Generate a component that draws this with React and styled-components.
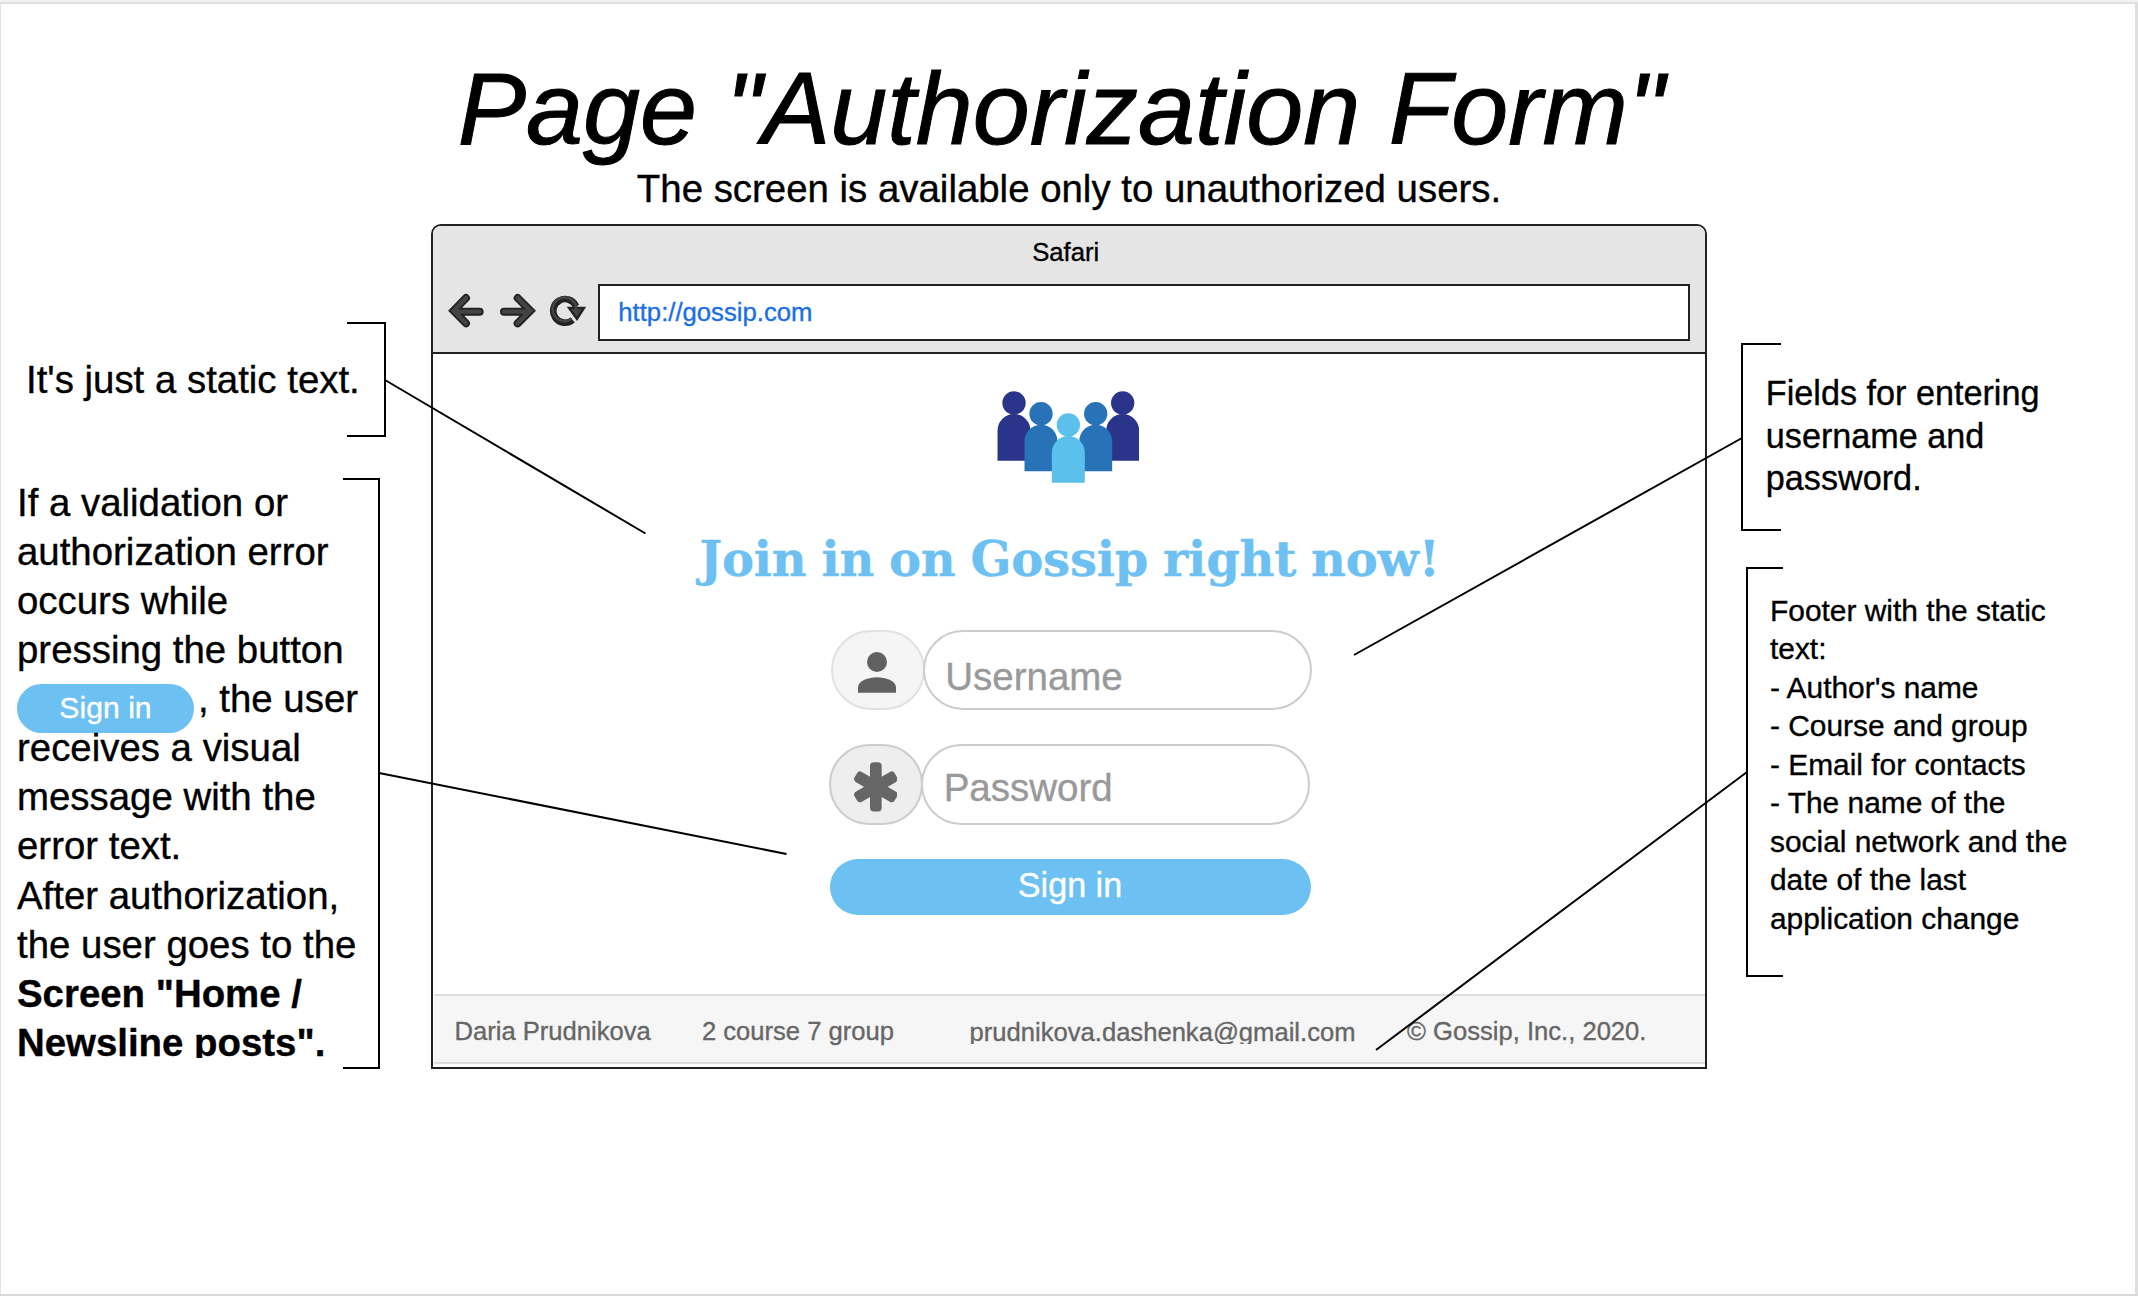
import React from 'react';
import styled, { createGlobalStyle } from 'styled-components';

const sans = '"Liberation Sans", Arial, sans-serif';
const ink = '#222222';
const blue = '#6cc1f2';

const GlobalStyle = createGlobalStyle`
  * { box-sizing: border-box; }
  body { margin: 0; background: #ffffff; font-family: ${sans}; }
`;

const Board = styled.main`
  position: relative;
  width: 2138px;
  height: 1296px;
  overflow: hidden;
  background: #ffffff;
  border-top: 2px solid #f1f1f1;
  border-bottom: 2px solid #dadada;
  box-shadow: inset 0 2px 0 #e0e0e0, inset 1px 0 0 #e2e2e2, inset -3px 0 0 #dedede;
  color: #000000;
  -webkit-text-stroke: 0.35px currentColor;
`;

const Heading = styled.header`
  display: flex;
  flex-direction: column;
  align-items: center;
  height: 222px;
  padding-top: 47px;
  white-space: nowrap;
`;

const Title = styled.h1`
  margin: 0 16px 0 0;
  font-size: 102.5px;
  line-height: 120px;
  font-style: italic;
  font-weight: 400;
  -webkit-text-stroke-width: 1px;
`;

const Subtitle = styled.p`
  margin: -2.8px 0 0;
  font-size: 38.4px;
  line-height: 46px;
`;

const Columns = styled.div`
  display: grid;
  grid-template-columns: 431px 1276px 1fr;
  align-items: start;
`;

const NoteColumn = styled.aside`
  display: flex;
  flex-direction: column;
  gap: ${(p) => p.$gap}px;
  padding-top: ${(p) => p.$top}px;
`;

const Note = styled.section`
  display: flex;
  align-items: ${(p) => p.$align || 'center'};
  justify-content: ${(p) => (p.$side === 'left' ? 'space-between' : 'flex-start')};
  width: ${(p) => p.$width}px;
  height: ${(p) => p.$height}px;
  margin-left: ${(p) => p.$indent || 0}px;
`;

const Bracket = styled.div`
  flex: none;
  align-self: stretch;
  width: ${(p) => p.$width}px;
  margin-left: ${(p) => p.$pull || 0}px;
  border: 2px solid #000000;
  border-${(p) => (p.$open === 'left' ? 'left' : 'right')}: 0;
`;

const NoteText = styled.div`
  flex: none;
  height: ${(p) => (p.$clip ? `${p.$clip}px` : 'auto')};
  overflow: ${(p) => (p.$clip ? 'hidden' : 'visible')};
  padding-bottom: ${(p) => p.$lift || 0}px;
  margin-left: ${(p) => p.$shift || 0}px;
  font-size: ${(p) => p.$size}px;
  line-height: ${(p) => p.$line}px;
  white-space: nowrap;
`;

const Line = styled.div`
  font-weight: ${(p) => (p.$bold ? 700 : 400)};
`;

const InlineButton = styled.span`
  display: inline-flex;
  align-items: center;
  justify-content: center;
  vertical-align: top;
  width: 177px;
  height: 49px;
  margin: 9.4px 4px -9.4px 0;
  border-radius: 24.5px;
  background: ${blue};
  color: #ffffff;
  font-size: 30.2px;
  line-height: 48px;
`;

const Browser = styled.section`
  display: flex;
  flex-direction: column;
  height: 845px;
  border: 2px solid ${ink};
  border-radius: 10px 10px 0 0;
  overflow: hidden;
`;

const Chrome = styled.div`
  height: 128px;
  background: #e5e5e5;
  border-bottom: 2px solid ${ink};
`;

const WindowTitle = styled.div`
  padding-right: 6.5px;
  font-size: 25.7px;
  line-height: 52px;
  text-align: center;
`;

const Toolbar = styled.div`
  display: flex;
  align-items: center;
  margin-top: 6px;
  padding: 0 15px 0 14.3px;
`;

const NavIcons = styled.div`
  display: flex;
  flex: none;
  width: 150.7px;
  padding-bottom: 3px;
  svg { display: block; flex: none; }
  svg + svg { margin-left: 14px; }
  svg + svg + svg { margin-left: 12.6px; }
`;

const AddressBar = styled.div`
  display: flex;
  flex: 1;
  align-items: center;
  height: 57px;
  padding: 0 18.3px 1px;
  border: 2px solid ${ink};
  background: #ffffff;
  color: #1b6fe2;
  font-size: 25.7px;
`;

const Page = styled.div`
  display: flex;
  flex: 1;
  flex-direction: column;
  align-items: center;
`;

const Logo = styled.svg`
  display: block;
  flex: none;
  width: 142.7px;
  height: 92px;
  margin: 36.7px 2px 0 0;
`;

const Slogan = styled.h2`
  margin: 46px 0 0 1px;
  color: ${blue};
  font-family: "DejaVu Serif", serif;
  font-size: 48px;
  line-height: 60px;
  font-weight: 700;
  letter-spacing: -0.2px;
  word-spacing: -1.6px;
  white-space: nowrap;
`;

const Form = styled.div`
  display: flex;
  flex-direction: column;
  width: 481px;
  margin: 41.3px 0 0 2px;
`;

const Field = styled.div`
  display: flex;
  height: ${(p) => p.$height}px;
  margin: 0 0 34px ${(p) => p.$indent}px;
`;

const FieldIcon = styled.div`
  display: flex;
  flex: none;
  align-items: center;
  justify-content: center;
  width: 94px;
  padding: ${(p) => p.$nudge};
  border: 2px solid ${(p) => p.$line};
  border-radius: 40.5px;
  background: ${(p) => p.$fill};
  svg { display: block; flex: none; }
`;

const Input = styled.div`
  display: flex;
  flex: none;
  align-items: center;
  width: 389px;
  margin-left: -2px;
  padding: ${(p) => p.$drop}px 0 0 20.7px;
  border: 2px solid #cccccc;
  border-radius: 40.5px;
  color: #999999;
  font-size: 38.5px;
`;

const SubmitButton = styled.button`
  width: 481px;
  height: 55.5px;
  padding: 0 0 2.5px;
  border: 0;
  border-radius: 28px;
  background: ${blue};
  color: #ffffff;
  font: 34.15px ${sans};
`;

const Footer = styled.footer`
  display: grid;
  grid-template-columns: 247.4px 267.7px 437.5px 1fr;
  align-items: center;
  width: 1271px;
  height: 70px;
  margin: auto 0 3px;
  padding: 3px 0 0 21px;
  border-top: 2px solid #dddddd;
  border-bottom: 2px solid #dddddd;
  background: #f6f6f6;
  color: #666666;
  font-size: 25.6px;
  white-space: nowrap;
`;

const FooterItem = styled.span`
  line-height: 26px;
`;

const FooterEmail = styled(FooterItem)`
  height: 25.6px;
  margin-top: 2px;
  overflow: hidden;
`;

const Connectors = styled.svg`
  position: absolute;
  left: 0;
  top: -2px;
  width: 2138px;
  height: 1296px;
  pointer-events: none;
`;

function StrokeIcon({ d, box, width }) {
  return (
    <svg viewBox={box} width={width} height="35.3" fill="none" strokeLinecap="round" strokeMiterlimit="4">
      <path d={d} stroke={ink} strokeWidth="24" />
      <path d={d} stroke="#444444" strokeWidth="13" />
    </svg>
  );
}

function ReloadIcon() {
  const arc = 'M459 331A35.5 35.5 0 1 1 469 290';
  return (
    <svg viewBox="388 250 112 106" width="37.3" height="35.3" fill="none">
      <path d={arc} stroke={ink} strokeWidth="20" />
      <path d="M448 295H493L472 328Z" fill="#444444" stroke={ink} strokeWidth="7" />
      <path d="M456 327A35.5 35.5 0 1 1 470 298" stroke="#444444" strokeWidth="8" />
    </svg>
  );
}

const people = [
  { x: 131, y: 98, fill: '#2b348b' },
  { x: 457, y: 98, fill: '#2b348b' },
  { x: 212, y: 130, fill: '#2872b8' },
  { x: 376, y: 130, fill: '#2872b8' },
  { x: 294, y: 164, fill: '#5bc1ec' },
];

function PeopleLogo() {
  return (
    <Logo viewBox="80 62 428 276">
      {people.map(({ x, y, fill }) => (
        <g key={x} fill={fill}>
          <circle cx={x} cy={y} r="35" />
          <path d={`M${x - 49.5} ${y + 173}V${y + 83}A49.5 50 0 0 1 ${x + 49.5} ${y + 83}V${y + 173}Z`} />
        </g>
      ))}
    </Logo>
  );
}

function UserIcon() {
  return (
    <svg viewBox="144 126 114 122" width="38" height="40.7" fill="#616161">
      <circle cx="201" cy="156" r="30" />
      <path d="M144 248V232C144 213 176 202 201 202S258 213 258 232V248Z" />
    </svg>
  );
}

function AsteriskIcon() {
  return (
    <svg viewBox="131 458 131 149" width="43.7" height="49.7" fill="#666666">
      <rect x="179" y="458.5" width="35" height="148" rx="11" />
      <rect x="179" y="463" width="35" height="139" rx="11" transform="rotate(60 196.5 532.5)" />
      <rect x="179" y="463" width="35" height="139" rx="11" transform="rotate(-60 196.5 532.5)" />
    </svg>
  );
}

const footerNotes = [
  'Footer with the static',
  'text:',
  "- Author's name",
  '- Course and group',
  '- Email for contacts',
  '- The name of the',
  'social network and the',
  'date of the last',
  'application change',
];

export default function App() {
  return (
    <Board>
      <GlobalStyle />
      <Heading>
        <Title>Page "Authorization Form"</Title>
        <Subtitle>The screen is available only to unauthorized users.</Subtitle>
      </Heading>
      <Columns>
        <NoteColumn $top={98} $gap={41}>
          <Note $side="left" $width={386} $height={115}>
            <NoteText $size={38.4} $line={46} $shift={26}>
              <Line>It's just a static text.</Line>
            </NoteText>
            <Bracket $open="left" $width={39} $pull={-20} />
          </Note>
          <Note $side="left" $align="flex-start" $width={380} $height={591}>
            <NoteText $size={38.4} $line={49.07} $shift={17} $clip={580}>
              <Line>If a validation or</Line>
              <Line>authorization error</Line>
              <Line>occurs while</Line>
              <Line>pressing the button</Line>
              <Line>
                <InlineButton>Sign in</InlineButton>, the user
              </Line>
              <Line>receives a visual</Line>
              <Line>message with the</Line>
              <Line>error text.</Line>
              <Line>After authorization,</Line>
              <Line>the user goes to the</Line>
              <Line $bold>Screen "Home /</Line>
              <Line $bold>Newsline posts".</Line>
            </NoteText>
            <Bracket $open="left" $width={37} $pull={-20} />
          </Note>
        </NoteColumn>

        <Browser>
          <Chrome>
            <WindowTitle>Safari</WindowTitle>
            <Toolbar>
              <NavIcons>
                <StrokeIcon box="82 250 112 106" width="37.3" d="M180 306H112M139 265L102 303L139 341" />
                <StrokeIcon box="236 250 114 106" width="38" d="M251 306H320M292 265L330 303L292 341" />
                <ReloadIcon />
              </NavIcons>
              <AddressBar>http://gossip.com</AddressBar>
            </Toolbar>
          </Chrome>
          <Page>
            <PeopleLogo />
            <Slogan>Join in on Gossip right now!</Slogan>
            <Form>
              <Field $height={80.5} $indent={1}>
                <FieldIcon $line="#e1e1e1" $fill="#f5f5f5" $nudge="4px 1px 0 0">
                  <UserIcon />
                </FieldIcon>
                <Input $drop={14}>Username</Input>
              </Field>
              <Field $height={81} $indent={-0.5}>
                <FieldIcon $line="#cccccc" $fill="#eeeeee" $nudge="4.5px 1px 0 0">
                  <AsteriskIcon />
                </FieldIcon>
                <Input $drop={7}>Password</Input>
              </Field>
              <SubmitButton>Sign in</SubmitButton>
            </Form>
            <Footer>
              <FooterItem>Daria Prudnikova</FooterItem>
              <FooterItem>2 course 7 group</FooterItem>
              <FooterEmail>prudnikova.dashenka@gmail.com</FooterEmail>
              <FooterItem>© Gossip, Inc., 2020.</FooterItem>
            </Footer>
          </Page>
        </Browser>

        <NoteColumn $top={119} $gap={36}>
          <Note $side="right" $width={380} $height={188} $indent={34}>
            <Bracket $open="right" $width={40} />
            <NoteText $size={34.2} $line={42.6} $shift={-15.2} $lift={2}>
              <Line>Fields for entering</Line>
              <Line>username and</Line>
              <Line>password.</Line>
            </NoteText>
          </Note>
          <Note $side="right" $width={380} $height={410} $indent={39}>
            <Bracket $open="right" $width={37} />
            <NoteText $size={29.9} $line={38.45} $shift={-13} $lift={14}>
              {footerNotes.map((text) => (
                <Line key={text}>{text}</Line>
              ))}
            </NoteText>
          </Note>
        </NoteColumn>
      </Columns>
      <Connectors viewBox="0 0 2138 1296" stroke="#000000" strokeWidth="2">
        <path d="M385 380L645.500 533.500M379 773L786.500 854M1742 438L1354 655M1747 772L1376 1050" />
      </Connectors>
    </Board>
  );
}
